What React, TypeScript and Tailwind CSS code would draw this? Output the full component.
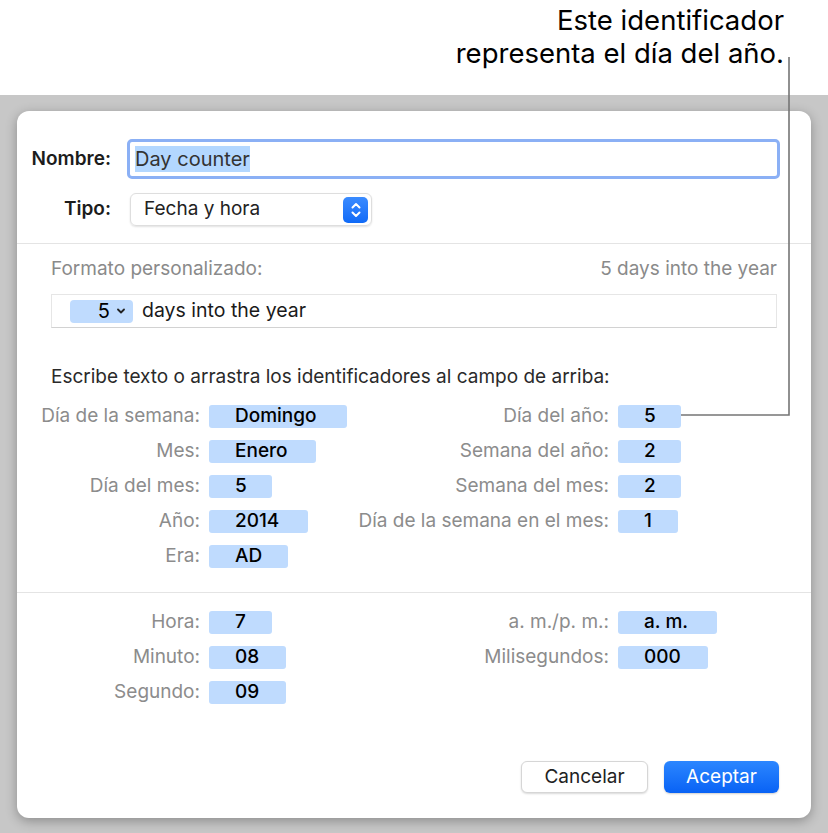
import React from 'react';

// Identifier rows of the date section
const DATE_ROWS: [string, string, string, string | null, string | null, string | null][] = [
  ['Día de la semana:', 'Domingo', 'w-[138px]', 'Día del año:', '5', 'w-[63px]'],
  ['Mes:', 'Enero', 'w-[107px]', 'Semana del año:', '2', 'w-[63px]'],
  ['Día del mes:', '5', 'w-[63px]', 'Semana del mes:', '2', 'w-[63px]'],
  ['Año:', '2014', 'w-[99px]', 'Día de la semana en el mes:', '1', 'w-[60px]'],
  ['Era:', 'AD', 'w-[79px]', null, null, null],
];

const TIME_ROWS: [string, string, string, string | null, string | null, string | null][] = [
  ['Hora:', '7', 'w-[63px]', 'a. m./p. m.:', 'a. m.', 'w-[99px]'],
  ['Minuto:', '08', 'w-[77px]', 'Milisegundos:', '000', 'w-[90px]'],
  ['Segundo:', '09', 'w-[77px]', null, null, null],
];

const Token = ({ text, className }: { text: string; className: string }) => (
  <span
    className={`flex h-[23px] items-center rounded-[3px] bg-[#bfdbfe] pl-[26px] text-[19px] font-medium text-black ${className}`}
  >
    {text}
  </span>
);

const IdentifierGrid = ({ rows }: { rows: typeof DATE_ROWS }) => (
  <div className="grid grid-cols-[149px_139px_252px_auto] auto-rows-[35px] items-center gap-x-[9px] text-[19px] text-[#8c8c8c]">
    {rows.map(([l, lv, lw, r, rv, rw], i) => (
      <React.Fragment key={i}>
        <span className="flex justify-end whitespace-nowrap">{l}</span>
        <Token text={lv} className={lw} />
        <span className="flex justify-end whitespace-nowrap">{r ?? ''}</span>
        {rv && rw ? <Token text={rv} className={rw} /> : <span />}
      </React.Fragment>
    ))}
  </div>
);

const Stepper = () => (
  <span className="flex h-[26px] w-[25px] items-center justify-center rounded-[5px] bg-gradient-to-b from-[#3a8bff] to-[#0f6af7]">
    <svg width="12" height="18" viewBox="0 0 12 18" fill="none" stroke="white" strokeWidth="2" strokeLinecap="round" strokeLinejoin="round">
      <path d="M2.5 6.5 6 3l3.5 3.5" />
      <path d="M2.5 11.5 6 15l3.5-3.5" />
    </svg>
  </span>
);

export default function App() {
  return (
    <div className="relative flex h-[833px] w-[828px] flex-col overflow-hidden bg-white font-['Inter',sans-serif]">
      {/* callout */}
      <div className="h-[95px] pr-[44px] pt-[4px] text-right text-[27.5px] leading-[33px] text-black">
        <div>Este identificador</div>
        <div>representa el día del año.</div>
      </div>

      <div className="flex-1 bg-[#c7c7c7] px-[17px] pb-[15px] pt-[16px]">
        <div className="h-[707px] rounded-[12px] bg-white shadow-[0_3px_12px_rgba(0,0,0,0.3)]">
          <div className="pr-[31px] pt-[28px]">
            <div className="flex h-[40px] items-center">
              <span className="w-[94px] text-right text-[19px] font-semibold text-[#1c1c1c]">Nombre:</span>
              <div className="ml-[16px] flex h-[40px] flex-1 items-center rounded-[5px] border-[3px] border-[#8bb0f5] pl-[5px]">
                <span className="bg-[#b3d7ff] text-[20px] leading-[26px] text-[#333]">Day counter</span>
              </div>
            </div>
            <div className="mt-[14px] flex h-[33px] items-center">
              <span className="w-[94px] text-right text-[19px] font-semibold text-[#1c1c1c]">Tipo:</span>
              <div className="ml-[19px] flex h-[33px] w-[242px] items-center justify-between rounded-[6px] border border-[#dedede] pl-[13px] pr-[3px] shadow-[0_1px_2px_rgba(0,0,0,0.12)]">
                <span className="text-[19px] text-[#222]">Fecha y hora</span>
                <Stepper />
              </div>
            </div>
          </div>

          <div className="mt-[17px] h-px bg-[#e4e4e4]" />

          <div className="px-[34px]">
            <div className="mt-[13px] flex h-[24px] items-center justify-between text-[19px] text-[#8a8a8a]">
              <span>Formato personalizado:</span>
              <span>5 days into the year</span>
            </div>
            <div className="mt-[13px] flex h-[34px] items-center border border-[#e6e6e6] border-b-[#d2d2d2] pl-[18px]">
              <span className="flex h-[23px] w-[63px] items-center justify-end gap-[7px] rounded-[4px] bg-[#bfdbfe] pr-[8px] text-[20px] text-black">
                5
                <svg width="8" height="6" viewBox="0 0 8 6" fill="none" stroke="#222" strokeWidth="1.8" strokeLinecap="round" strokeLinejoin="round">
                  <path d="M1 1.5 4 4.5 7 1.5" />
                </svg>
              </span>
              <span className="ml-[9px] text-[19.5px] text-[#1a1a1a]">days into the year</span>
            </div>
            <div className="mt-[37px] flex h-[24px] items-center text-[19px] text-[#2a2a2a]">
              Escribe texto o arrastra los identificadores al campo de arriba:
            </div>
            <div className="mt-[9.5px]">
              <IdentifierGrid rows={DATE_ROWS} />
            </div>
          </div>

          <div className="mt-[18.5px] h-px bg-[#e4e4e4]" />

          <div className="mt-[11.5px] px-[34px]">
            <IdentifierGrid rows={TIME_ROWS} />
          </div>

          <div className="mt-[51.5px] flex justify-end gap-[16px] pr-[32px]">
            <button className="h-[32px] w-[127px] rounded-[6px] border border-[#d6d6d6] bg-white text-[19px] text-[#222] shadow-[0_1px_2px_rgba(0,0,0,0.15)]">
              Cancelar
            </button>
            <button className="h-[32px] w-[115px] rounded-[6px] bg-gradient-to-b from-[#2b86ff] to-[#0862f5] text-[19px] text-white shadow-[0_1px_2px_rgba(0,0,0,0.2)]">
              Aceptar
            </button>
          </div>
        </div>
      </div>

      {/* leader line from the callout to the identifier */}
      <svg className="pointer-events-none absolute left-0 top-0" width="828" height="833" fill="none">
        <path d="M789 57V415H681" stroke="#757575" strokeWidth="1.6" />
      </svg>
    </div>
  );
}
